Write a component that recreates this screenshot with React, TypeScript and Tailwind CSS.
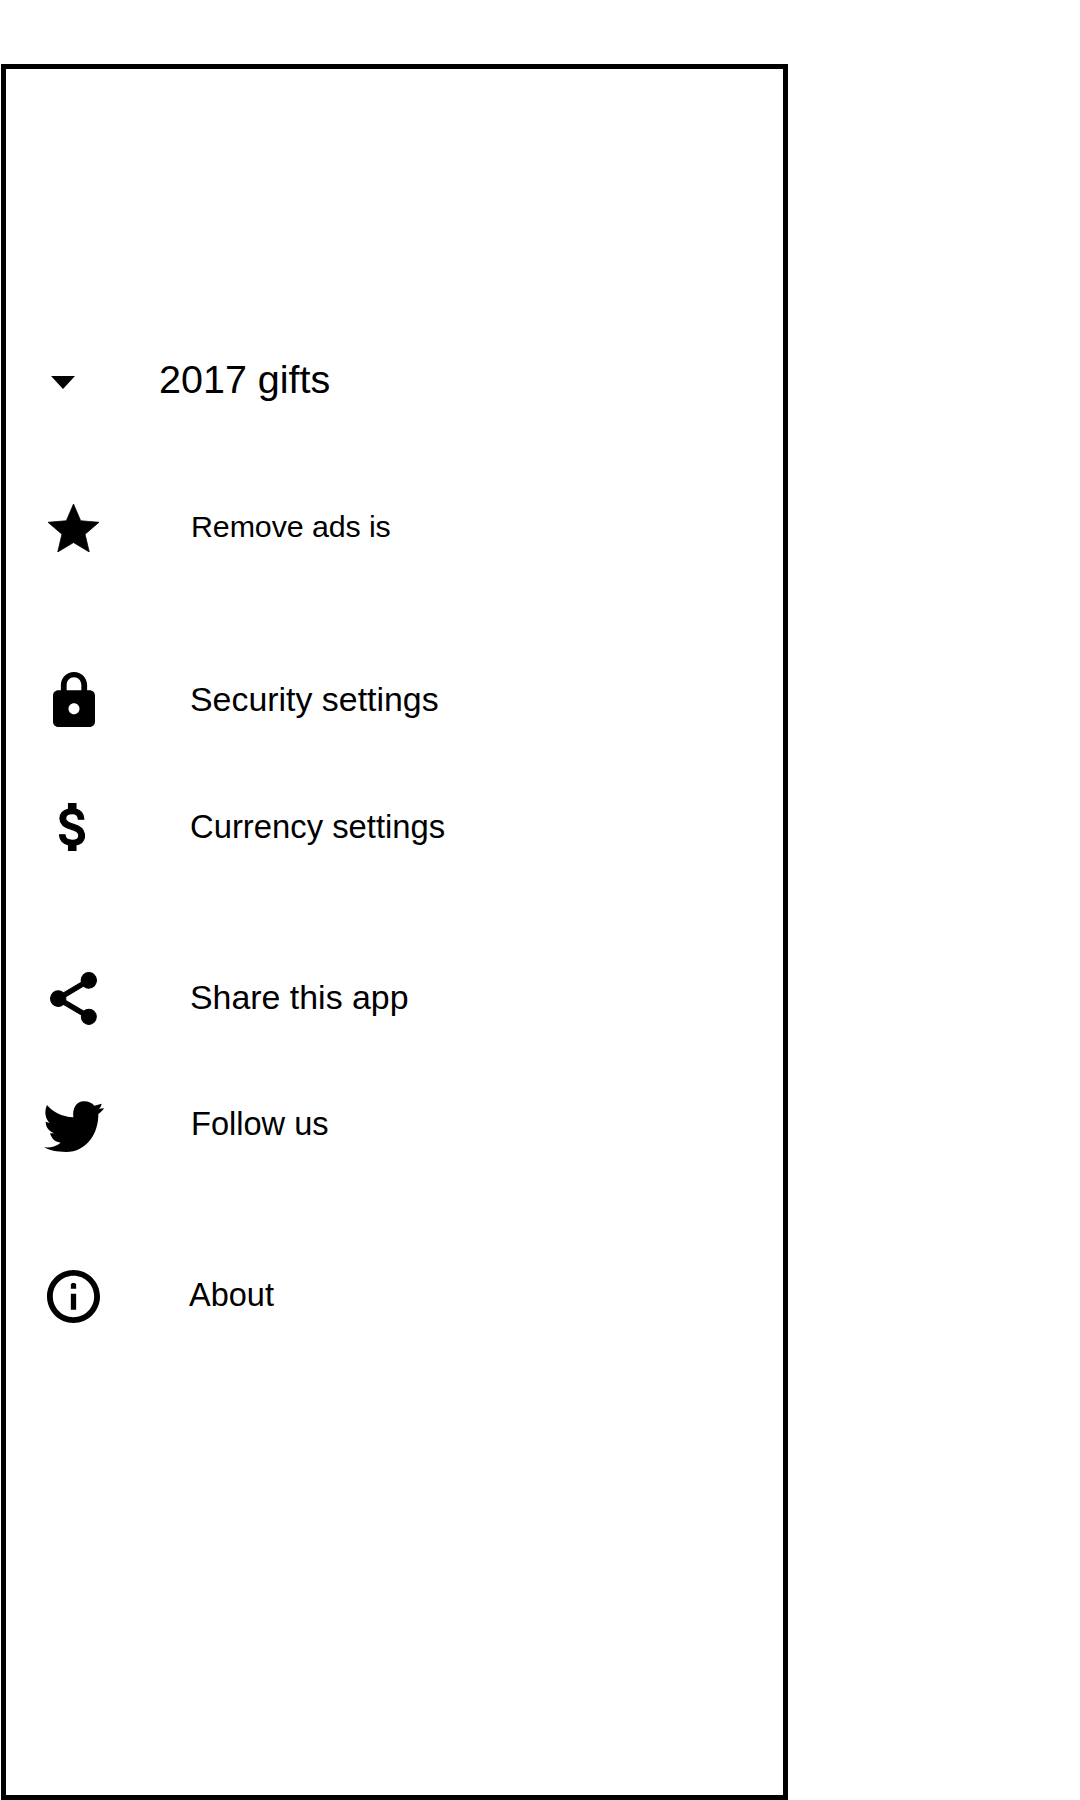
type Item = {
  label: string;
  row: string;
  icon: string;
  text: string;
  viewBox: string;
  path: string;
  stroke?: number;
};

const items: Item[] = [
  {
    label: "2017 gifts",
    row: "mt-[280px]",
    icon: "ml-[45px] mt-[27px] w-[24px] h-[13px] mr-[84px]",
    text: "text-[39.5px]",
    viewBox: "0 0 24 13",
    path: "M0 0H24L12 13Z",
  },
  {
    label: "Remove ads is",
    row: "mt-[87px]",
    icon: "ml-[42px] mt-[8px] w-[51px] h-[48px] mr-[92px]",
    text: "text-[30.4px] tracking-[-0.1px]",
    viewBox: "2 2 20 19",
    path: "M12 17.27L18.18 21l-1.64-7.03L22 9.24l-7.19-.61L12 2 9.19 8.63 2 9.24l5.46 4.73L5.82 21z",
    stroke: 0.3,
  },
  {
    label: "Security settings",
    row: "mt-[113px]",
    icon: "ml-[46.5px] mt-[3px] w-[42px] h-[55px] mr-[95.5px]",
    text: "text-[33.9px]",
    viewBox: "4 1 16 21",
    path: "M18 8h-1V6c0-2.76-2.24-5-5-5S7 3.24 7 6v2H6c-1.1 0-2 .9-2 2v10c0 1.1.9 2 2 2h12c1.1 0 2-.9 2-2V10c0-1.1-.9-2-2-2zm-6 9.1c-1.16 0-2.1-.94-2.1-2.1s.94-2.1 2.1-2.1 2.1.94 2.1 2.1-.94 2.1-2.1 2.1zM14.8 8H9.2V6c0-1.75 1.25-3 2.8-3s2.8 1.25 2.8 3v2z",
  },
  {
    label: "Currency settings",
    row: "mt-[68px]",
    icon: "ml-[53px] mt-[6px] w-[26px] h-[48px] mr-[105px]",
    text: "text-[32.8px]",
    viewBox: "6.1 2.8 10.6 18.4",
    path: "M11.8 10.9c-2.27-.59-3-1.2-3-2.15 0-1.09 1.01-1.85 2.7-1.85 1.78 0 2.44.85 2.5 2.1h2.21c-.07-1.72-1.12-3.3-3.21-3.81V3h-3v2.16c-1.94.42-3.5 1.68-3.5 3.61 0 2.31 1.91 3.46 4.7 4.13 2.5.6 3 1.48 3 2.41 0 .69-.49 1.79-2.7 1.79-2.06 0-2.87-.92-2.98-2.1h-2.2c.12 2.19 1.76 3.42 3.68 3.83V21h3v-2.15c1.95-.37 3.5-1.5 3.5-3.55 0-2.84-2.43-3.81-4.7-4.4z",
    stroke: 0.5,
  },
  {
    label: "Share this app",
    row: "mt-[110px]",
    icon: "ml-[44px] mt-[5px] w-[47px] h-[53px] mr-[93px]",
    text: "text-[33.9px]",
    viewBox: "2.8 1.8 18.4 20.32",
    path: "M18 16.08c-.76 0-1.44.3-1.96.77L8.91 12.7c.05-.23.09-.46.09-.7s-.04-.47-.09-.7l7.05-4.11c.54.5 1.25.81 2.04.81 1.66 0 3-1.34 3-3s-1.34-3-3-3-3 1.34-3 3c0 .24.04.47.09.7L8.04 9.81C7.5 9.31 6.79 9 6 9c-1.66 0-3 1.34-3 3s1.34 3 3 3c.79 0 1.5-.31 2.04-.81l7.12 4.16c-.05.21-.08.43-.08.65 0 1.61 1.31 2.92 2.92 2.92 1.61 0 2.92-1.31 2.92-2.92s-1.31-2.92-2.92-2.92z",
    stroke: 0.4,
  },
  {
    label: "Follow us",
    row: "mt-[67px]",
    icon: "ml-[38px] mt-[7px] w-[60px] h-[51px] mr-[87px]",
    text: "text-[32.6px]",
    viewBox: "12 13 180 153",
    path: "M21 25C38 45 65 60 100 62C97 35 108 14 132 14C146 14 156 19 163 27L185 21C184 28 181 32 177 36L192 35C188 42 182 47 175 52C176 110 140 166 78 166C50 166 28 161 12 152C32 154 50 149 62 138C48 137 36 129 30 110L43 110C28 104 17 92 17 75L29 79C16 66 12 45 21 25Z",
  },
  {
    label: "About",
    row: "mt-[111px]",
    icon: "ml-[41px] mt-[5px] w-[53px] h-[53px] mr-[89px]",
    text: "text-[32.5px]",
    viewBox: "2 2 20 20",
    path: "M11 17h2v-6h-2v6zm1-15C6.48 2 2 6.48 2 12s4.48 10 10 10 10-4.48 10-10S17.52 2 12 2zm0 17.8c-4.31 0-7.8-3.49-7.8-7.8S7.69 4.2 12 4.2s7.8 3.49 7.8 7.8-3.49 7.8-7.8 7.8zM11.5 6.9h1l.5.5v1.7h-2V7.4z",
  },
];

export default function App() {
  return (
    <div className="flex h-[1800px] w-[1080px] flex-col overflow-hidden bg-white pl-px pt-16 font-['Liberation_Sans',Arial,sans-serif] text-black">
      <nav className="flex h-[1736px] w-[787px] flex-col border-[5px] border-black bg-white">
        {items.map((item) => (
          <div key={item.label} className={`flex h-[60px] shrink-0 items-start ${item.row}`}>
            <svg
              viewBox={item.viewBox}
              preserveAspectRatio="none"
              fill="currentColor"
              stroke={item.stroke ? "currentColor" : "none"}
              strokeWidth={item.stroke}
              className={`shrink-0 ${item.icon}`}
            >
              <path d={item.path} />
            </svg>
            <span className={`whitespace-nowrap leading-[60px] ${item.text}`}>{item.label}</span>
          </div>
        ))}
      </nav>
    </div>
  );
}
